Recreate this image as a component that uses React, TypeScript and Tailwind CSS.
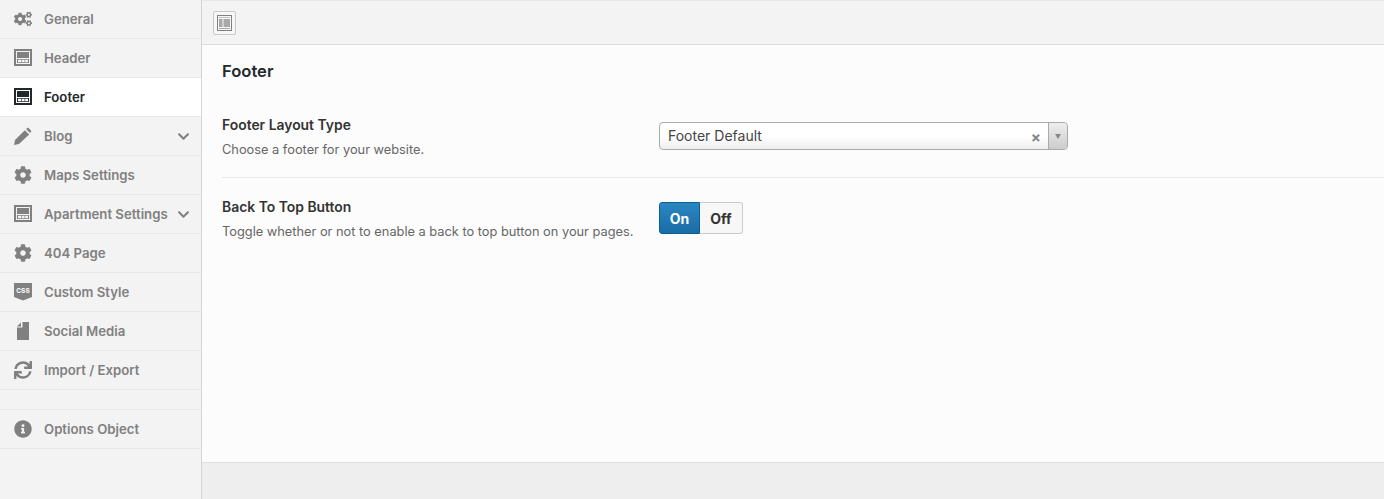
import React from "react";
import { FaCogs, FaCog, FaSync, FaInfoCircle, FaChevronDown } from "react-icons/fa";

const LayoutIcon = ({ top }: { top?: boolean }) => (
  <svg width="18" height="18" viewBox="0 0 18 18" className="shrink-0">
    <path fill="currentColor" fillRule="evenodd" d="M0 0h18v17H0zM2 2v13h14V2z" />
    <path fill="currentColor" d="M3 3h12v6H3z" />
    <path fill="currentColor" d="M3 10h12v4H3z" />
    <path fill={top ? "#fff" : "#f3f3f3"} d="M4 10.800h3v2.400H4zM7.600 10.800h3v2.400h-3zM11.200 10.800h2.800v2.400h-2.800z" />
  </svg>
);

const PencilIcon = () => (
  <svg width="18" height="18" viewBox="0 0 18 18" className="shrink-0">
    <path fill="currentColor" d="M10.800 3.200l4.400 4.400L5 17l-5 1 1-5z" />
    <path fill="currentColor" d="M12 2l2-1.500 3.500 3.500L16 6z" />
  </svg>
);

const CssIcon = () => (
  <svg width="18" height="18" viewBox="0 0 18 18" className="shrink-0">
    <path fill="currentColor" d="M0 0h18v14l-9 3.500L0 14z" />
    <text x="9" y="10" textAnchor="middle" fontSize="6.500" fontWeight="800" fill="#f3f3f3" fontFamily="Inter, sans-serif">CSS</text>
  </svg>
);

const FileIcon = () => (
  <svg width="18" height="18" viewBox="0 0 18 18" className="shrink-0">
    <path fill="currentColor" d="M8.500 0H15v18H3V5.500h5.500zM7 0.500v4H3z" />
  </svg>
);

type Item = { label: string; icon: React.ReactNode; chevron?: boolean; active?: boolean };

const items: Item[] = [
  { label: "General", icon: <FaCogs size={18} /> },
  { label: "Header", icon: <LayoutIcon /> },
  { label: "Footer", icon: <LayoutIcon top />, active: true },
  { label: "Blog", icon: <PencilIcon />, chevron: true },
  { label: "Maps Settings", icon: <FaCog size={18} /> },
  { label: "Apartment Settings", icon: <LayoutIcon />, chevron: true },
  { label: "404 Page", icon: <FaCog size={18} /> },
  { label: "Custom Style", icon: <CssIcon /> },
  { label: "Social Media", icon: <FileIcon /> },
  { label: "Import / Export", icon: <FaSync size={18} /> },
];

const NavRow = ({ label, icon, chevron, active }: Item) => (
  <div
    className={`flex h-[39px] items-center border-b border-[#e8e8e8] pl-[14px] pr-[11px] ${
      active ? "bg-white text-[#23282d]" : "text-[#808080]"
    }`}
  >
    <span className="flex w-[18px] shrink-0 justify-center">{icon}</span>
    <span className="ml-[12px] flex-1 pt-[2px] text-[13.200px] font-semibold">{label}</span>
    {chevron && <FaChevronDown size={13} />}
  </div>
);

export default function App() {
  return (
    <div className="flex h-[499px] w-[1384px] overflow-hidden bg-[#fcfcfc] font-['Inter',sans-serif]">
      <aside className="w-[202px] shrink-0 border-r border-[#d5d5d5] bg-[#f3f3f3]">
        {items.map((item) => (
          <NavRow key={item.label} {...item} />
        ))}
        <div className="h-[20px] border-b border-[#e8e8e8]" />
        <NavRow label="Options Object" icon={<FaInfoCircle size={18} />} />
      </aside>

      <main className="flex min-w-0 flex-1 flex-col">
        <div className="flex h-[45px] items-center border-b border-[#dcdcdc] border-t border-t-[#e8e8e8] bg-[#f3f3f3] pl-[11px]">
          <button className="flex h-[24px] w-[23px] items-center justify-center rounded-[2px] border border-[#c8c8c8] bg-[#f7f7f7]">
            <svg width="15" height="16" viewBox="0 0 15 16">
              <path fill="#808080" fillRule="evenodd" d="M0 0h15v16H0zM1 1v14h13V1z" />
              <path fill="#c0c0c0" d="M2 2h11v1H2z" />
              <path fill="#a8a8a8" d="M2 4h3.500v8H2zM6.500 4H13v8H6.500zM2 13h11v1H2z" />
            </svg>
          </button>
        </div>

        <div className="flex-1 pl-[20px]">
          <h2 className="pt-[16px] text-[16.600px] leading-[20px] font-semibold text-[#23282d]">Footer</h2>

          <section className="mt-[26px] flex h-[71px] border-b border-[#e8e8e8] pt-[9px]">
            <div className="w-[437px] shrink-0">
              <h4 className="text-[13.900px] leading-[18px] font-semibold text-[#333]">Footer Layout Type</h4>
              <p className="mt-[7px] text-[12.800px] leading-[18px] text-[#666]">Choose a footer for your website.</p>
            </div>
            <div className="mt-[6px] flex h-[28px] w-[409px] rounded-[4px] border border-[#aaa] bg-gradient-to-b from-white from-50% to-[#eee] text-[14px] text-[#444]">
              <span className="flex-1 pl-[8px] leading-[26px]">Footer Default</span>
              <span className="mt-[3px] pr-[7px] text-[15px] leading-[24px] font-bold text-[#888]">×</span>
              <span className="flex w-[19px] items-center justify-center rounded-r-[4px] border-l border-[#aaa] bg-gradient-to-b from-[#eee] to-[#ccc]">
                <span className="h-0 w-0 border-x-[3.500px] border-t-[5px] border-x-transparent border-t-[#888]" />
              </span>
            </div>
          </section>

          <section className="flex pt-[20px]">
            <div className="w-[437px] shrink-0">
              <h4 className="text-[13.900px] leading-[18px] font-semibold text-[#333]">Back To Top Button</h4>
              <p className="mt-[7px] text-[12.800px] leading-[18px] text-[#666]">Toggle whether or not to enable a back to top button on your pages.</p>
            </div>
            <div className="mt-[4px] flex h-[32px] w-[84px] text-[14px] font-bold">
              <span className="flex w-[41px] items-center justify-center rounded-l-[3px] border border-[#0b5f92] bg-gradient-to-b from-[#2a87c2] to-[#1a6ca5] text-white">On</span>
              <span className="flex flex-1 items-center justify-center rounded-r-[3px] border border-l-0 border-[#ccc] bg-[#f7f7f7] text-[#333]">Off</span>
            </div>
          </section>
        </div>

        <div className="h-[37px] border-t border-[#e0e0e0] bg-[#eeeeee]" />
      </main>
    </div>
  );
}
